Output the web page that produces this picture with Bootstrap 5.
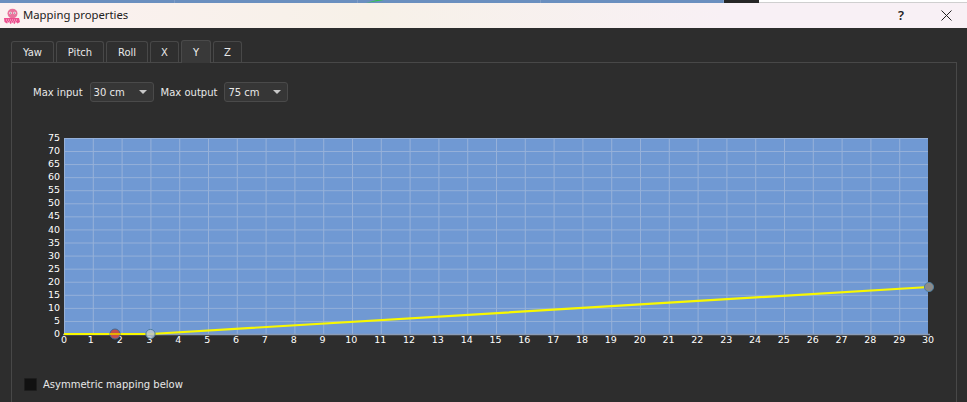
<!DOCTYPE html>
<html lang="en">
<head>
<meta charset="utf-8">
<title>Mapping properties</title>
<link href="https://cdn.jsdelivr.net/npm/bootstrap@5.3.0/dist/css/bootstrap.min.css" rel="stylesheet">
<style>
html, body { height: 402px; overflow: hidden; }
body { background: #2d2d2d; color: #e8e8e8; font-family: "DejaVu Sans", sans-serif; font-size: 10px; }
.top-strip { height: 3px; background: repeating-linear-gradient(90deg, #6a8fbf 0, #6a8fbf 90.5px, #7f9dc6 90.5px, #7f9dc6 91.5px); background-position: -8px 0; }
.strip-green { width: 18px; margin-left: 366px; background: #32c84a; clip-path: polygon(0 100%, 100% 0, 60% 0, 0 100%); }
.strip-dark { width: 35px; margin-left: 340px; background: #262626; }
.strip-light { background: #fff; border-bottom: 1px solid #cfcfcf; }
.title-bar { height: 25px; background: linear-gradient(90deg, #fbf1f1, #f7f1e8 38%, #f8f0f5 75%); color: #222; padding-left: 3px; font-family: "Noto Sans", sans-serif; font-size: 11.3px; }
.title-name { margin-left: 2px; }
.help-btn { width: 48px; height: 25px; font-size: 13px; font-weight: 600; color: #222; }
.close-btn { width: 42px; height: 25px; color: #222; }
.win-tabs { margin: 12px 0 0 11px; gap: 2px; border: 0; height: 22px; align-items: flex-end; }
.win-tabs .nav-link { height: 21px; padding: 0; display: flex; align-items: center; justify-content: center; color: #e8e8e8; background: #2f2f2f; border: 1px solid #484848; border-bottom: 0; border-radius: 3px 3px 0 0; margin: 0; }
.win-tabs .nav-link.active { height: 23px; background: #393939; color: #f0f0f0; border-color: #4a4a4a; margin-bottom: -1px; position: relative; z-index: 1; }
.tab-yaw { width: 43px; } .tab-pitch { width: 48px; } .tab-roll { width: 42px; } .tab-x { width: 29px; } .tab-y { width: 30px; margin-right: -1px; } .tab-z { width: 29px; }
.win-panel { margin: 0 10px 0 11px; height: 360px; border: 1px solid #484848; background: #2d2d2d; padding: 19px 0 0 21px; }
.map-row { height: 20px; }
.map-select { width: 64px; height: 20px; margin: 0 7px; padding: 0 6px 0 3px; font-size: 10px; color: #e8e8e8; background: #363636; border: 1px solid #4a4a4a; border-radius: 3px; }
.map-select::after { border-top-color: #c8c8c8; border-width: 4px 4px 0; margin: 0; }
.chart-svg { display: block; margin: 28px 0 0 7px; }
.chart-svg text { font-family: "DejaVu Sans", sans-serif; font-size: 9.5px; fill: #fff; }
.asym { margin: 32px 0 0 -9px; min-height: 0; padding: 0; gap: 6px; }
.asym .form-check-input { float: none; width: 13px; height: 13px; margin: 0; background-color: #111; border: 1px solid #1d1d1d; border-radius: 1px; }
.asym .form-check-label { color: #e8e8e8; }
</style>
</head>
<body>
<div class="top-strip d-flex">
  <div class="strip-green"></div>
  <div class="strip-dark"></div>
  <div class="strip-light flex-grow-1"></div>
</div>
<div class="title-bar d-flex align-items-center">
  <svg width="18" height="18" viewBox="0 0 18 18" aria-hidden="true">
    <ellipse cx="9.500" cy="6.500" rx="5" ry="4.800" fill="#e8739c"/>
    <path d="M1 11h15l1 4-2.500 1.500-1.500-1.500-1.500 2-2-1.500-2 1.500-1.500-2-2 1.500-2.500-1.500z" fill="#ec4f8e"/>
    <circle cx="7.500" cy="6" r="1.200" fill="#fff"/><circle cx="11.500" cy="6" r="1.200" fill="#fff"/>
    <circle cx="7.500" cy="6" r=".5" fill="#333"/><circle cx="11.500" cy="6" r=".5" fill="#333"/>
    <path d="M3 13h12M4 15h10" stroke="#f9c6dc" stroke-dasharray="1 1"/>
  </svg>
  <span class="title-name flex-grow-1">Mapping properties</span>
  <span class="help-btn d-flex align-items-center justify-content-center">?</span>
  <span class="close-btn d-flex align-items-center justify-content-center">
    <svg width="11" height="11" viewBox="0 0 11 11" aria-hidden="true"><path d="M.5.5l10 10M10.500.5l-10 10" stroke="#222" fill="none"/></svg>
  </span>
</div>
<ul class="nav nav-tabs win-tabs">
  <li class="nav-item"><a class="nav-link tab-yaw" href="#">Yaw</a></li>
  <li class="nav-item"><a class="nav-link tab-pitch" href="#">Pitch</a></li>
  <li class="nav-item"><a class="nav-link tab-roll" href="#">Roll</a></li>
  <li class="nav-item"><a class="nav-link tab-x" href="#">X</a></li>
  <li class="nav-item"><a class="nav-link tab-y active" href="#">Y</a></li>
  <li class="nav-item"><a class="nav-link tab-z" href="#">Z</a></li>
</ul>
<div class="win-panel">
  <div class="map-row d-flex align-items-center">
    <span>Max input</span>
    <button type="button" class="btn map-select dropdown-toggle d-flex align-items-center justify-content-between">30 cm</button>
    <span>Max output</span>
    <button type="button" class="btn map-select dropdown-toggle d-flex align-items-center justify-content-between">75 cm</button>
  </div>
  <svg class="chart-svg" width="905" height="215" viewBox="40 130 905 215" role="img" aria-label="Mapping curve">
    <defs>
      <pattern id="gridcell" x="64" y="138" width="28.8" height="13.067" patternUnits="userSpaceOnUse">
        <path d="M.5 0V13.067M0 .5H28.8" stroke="#96b1d9" stroke-width="1" fill="none"/>
      </pattern>
    </defs>
    <rect x="64" y="138" width="864" height="196" fill="#7099d3"/>
    <rect x="64" y="138" width="864" height="196" fill="url(#gridcell)"/>
    <path d="M63 334.500H930" stroke="#8a9bb5" stroke-width="1.500"/>
    <g text-anchor="end">
      <text x="60" y="141">75</text><text x="60" y="154">70</text><text x="60" y="167">65</text><text x="60" y="180">60</text>
      <text x="60" y="193">55</text><text x="60" y="206">50</text><text x="60" y="219">45</text><text x="60" y="232.500">40</text>
      <text x="60" y="245.500">35</text><text x="60" y="258.500">30</text><text x="60" y="271.500">25</text><text x="60" y="284.500">20</text>
      <text x="60" y="298">15</text><text x="60" y="311">10</text><text x="60" y="324">5</text><text x="60" y="337">0</text>
    </g>
    <g text-anchor="middle">
      <text x="64" y="343">0</text><text x="90.800" y="343">1</text><text x="119.700" y="343">2</text><text x="149.500" y="343">3</text>
      <text x="178.300" y="343">4</text><text x="207.200" y="343">5</text><text x="236" y="343">6</text><text x="264.800" y="343">7</text>
      <text x="293.700" y="343">8</text><text x="322.500" y="343">9</text><text x="351.300" y="343">10</text><text x="380.200" y="343">11</text>
      <text x="409" y="343">12</text><text x="437.800" y="343">13</text><text x="466.700" y="343">14</text><text x="495.500" y="343">15</text>
      <text x="524.300" y="343">16</text><text x="553.200" y="343">17</text><text x="582" y="343">18</text><text x="610.800" y="343">19</text>
      <text x="639.700" y="343">20</text><text x="668.500" y="343">21</text><text x="697.300" y="343">22</text><text x="726.200" y="343">23</text>
      <text x="755" y="343">24</text><text x="783.800" y="343">25</text><text x="812.700" y="343">26</text><text x="841.500" y="343">27</text>
      <text x="870.300" y="343">28</text><text x="899.200" y="343">29</text><text x="928" y="343">30</text>
    </g>
    <path d="M64 334H150.500L929 287" stroke="#f8f800" stroke-width="2.200" fill="none"/>
    <circle cx="115" cy="334" r="5" fill="#c2504e" stroke="#3f6c92" stroke-width="1"/>
    <path d="M110 334H120" stroke="#e8b000" stroke-width="2"/>
    <circle cx="150.500" cy="334" r="4.600" fill="#b8c4d0" fill-opacity=".85" stroke="#4d7d9e" stroke-width="1"/>
    <circle cx="929" cy="287" r="4.600" fill="#8b8b8b" stroke="#4d7d9e" stroke-width="1"/>
  </svg>
  <div class="form-check asym d-flex align-items-center">
    <input class="form-check-input" type="checkbox" id="asym">
    <label class="form-check-label" for="asym">Asymmetric mapping below</label>
  </div>
</div>
<script src="https://cdn.jsdelivr.net/npm/bootstrap@5.3.0/dist/js/bootstrap.bundle.min.js"></script>
</body>
</html>
